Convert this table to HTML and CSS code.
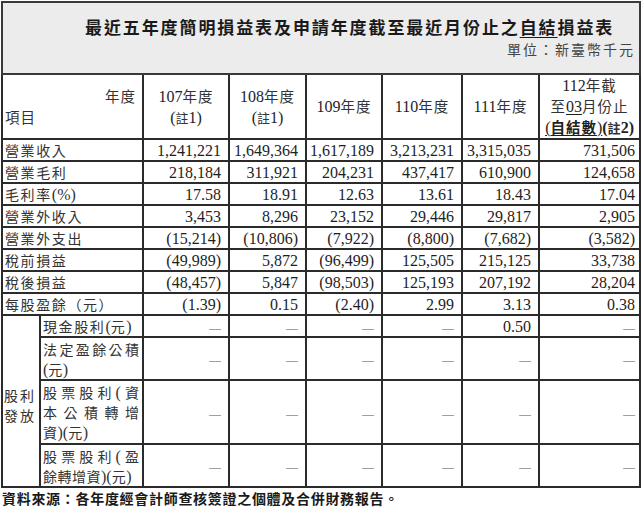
FILE: index.html
```html
<!DOCTYPE html>
<html lang="zh-Hant">
<head>
<meta charset="utf-8">
<title>最近五年度簡明損益表</title>
<link rel="stylesheet" href="styles.css">
</head>
<body>
<div class="page">
<table class="fin">
  <colgroup>
    <col class="c0a"><col class="c0b"><col class="c1"><col class="c2"><col class="c3"><col class="c4"><col class="c5"><col class="c6">
  </colgroup>
  <tr class="r-title">
    <td colspan="8" class="title-cell">
      <div class="ttl">最近五年度簡明損益表及申請年度截至最近月份止之<u>自結</u>損益表</div>
      <div class="unit">單位：新臺幣千元</div>
    </td>
  </tr>
  <tr class="r-head">
    <td colspan="2" class="hd0">
      <div class="hd-year"><span class="cj">年度</span></div>
      <div class="hd-item"><span class="cj">項目</span></div>
    </td>
    <td class="hd">107<span class="cj">年度</span><br>(<span class="cjs">註</span>1)</td>
    <td class="hd">108<span class="cj">年度</span><br>(<span class="cjs">註</span>1)</td>
    <td class="hd">109<span class="cj">年度</span></td>
    <td class="hd">110<span class="cj">年度</span></td>
    <td class="hd">111<span class="cj">年度</span></td>
    <td class="hd">112<span class="cj">年截</span><br><span class="cj">至</span><u>03</u><span class="cj">月份止</span><br><u>(<span class="cj b">自結數</span>)</u><b>(<span class="cjs">註</span>2)</b></td>
  </tr>
  <tr class="r"><td colspan="2" class="lb">營業收入</td><td>1,241,221</td><td>1,649,364</td><td>1,617,189</td><td>3,213,231</td><td>3,315,035</td><td>731,506</td></tr>
  <tr class="r"><td colspan="2" class="lb">營業毛利</td><td>218,184</td><td>311,921</td><td>204,231</td><td>437,417</td><td>610,900</td><td>124,658</td></tr>
  <tr class="r"><td colspan="2" class="lb">毛利率<span class="lat">(%)</span></td><td>17.58</td><td>18.91</td><td>12.63</td><td>13.61</td><td>18.43</td><td>17.04</td></tr>
  <tr class="r"><td colspan="2" class="lb">營業外收入</td><td>3,453</td><td>8,296</td><td>23,152</td><td>29,446</td><td>29,817</td><td>2,905</td></tr>
  <tr class="r"><td colspan="2" class="lb">營業外支出</td><td>(15,214)</td><td>(10,806)</td><td>(7,922)</td><td>(8,800)</td><td>(7,682)</td><td>(3,582)</td></tr>
  <tr class="r"><td colspan="2" class="lb">稅前損益</td><td>(49,989)</td><td>5,872</td><td>(96,499)</td><td>125,505</td><td>215,125</td><td>33,738</td></tr>
  <tr class="r"><td colspan="2" class="lb">稅後損益</td><td>(48,457)</td><td>5,847</td><td>(98,503)</td><td>125,193</td><td>207,192</td><td>28,204</td></tr>
  <tr class="r"><td colspan="2" class="lb">每股盈餘（元）</td><td>(1.39)</td><td>0.15</td><td>(2.40)</td><td>2.99</td><td>3.13</td><td>0.38</td></tr>
  <tr class="r">
    <td rowspan="4" class="div-lb">股利<br>發放</td>
    <td class="lb sub">現金股利<span class="lat">(</span>元<span class="lat">)</span></td>
    <td><span class="dash">—</span></td><td><span class="dash">—</span></td><td><span class="dash">—</span></td><td><span class="dash">—</span></td><td>0.50</td><td><span class="dash">—</span></td>
  </tr>
  <tr class="r2">
    <td class="lb sub"><span class="jl">法定盈餘公積</span><span class="ll"><span class="lat">(</span>元<span class="lat">)</span></span></td>
    <td><span class="dash">—</span></td><td><span class="dash">—</span></td><td><span class="dash">—</span></td><td><span class="dash">—</span></td><td><span class="dash">—</span></td><td><span class="dash">—</span></td>
  </tr>
  <tr class="r3">
    <td class="lb sub"><span class="jl">股票股利<span class="lat">(</span>資</span><span class="jl">本公積轉增</span><span class="ll">資<span class="lat">)(</span>元<span class="lat">)</span></span></td>
    <td><span class="dash">—</span></td><td><span class="dash">—</span></td><td><span class="dash">—</span></td><td><span class="dash">—</span></td><td><span class="dash">—</span></td><td><span class="dash">—</span></td>
  </tr>
  <tr class="r2b">
    <td class="lb sub"><span class="jl">股票股利<span class="lat">(</span>盈</span><span class="ll">餘轉增資<span class="lat">)(</span>元<span class="lat">)</span></span></td>
    <td><span class="dash">—</span></td><td><span class="dash">—</span></td><td><span class="dash">—</span></td><td><span class="dash">—</span></td><td><span class="dash">—</span></td><td><span class="dash">—</span></td>
  </tr>
</table>
<p class="source">資料來源：各年度經會計師查核簽證之個體及合併財務報告。</p>
</div>
</body>
</html>
```
FILE: styles.css
```css
html, body {
  margin: 0;
  padding: 0;
  background: #ffffff;
}
.page {
  padding: 1px 0 0 1px;
  width: 641px;
  font-family: "Liberation Serif", "Noto Sans CJK TC", serif;
  color: #1e1e1e;
}
.fin {
  border-collapse: collapse;
  table-layout: fixed;
  width: 640px;
  font-size: 16px;
}
.c0a { width: 38px; }
.c0b { width: 103px; }
.c1 { width: 86px; }
.c2 { width: 77px; }
.c3 { width: 76px; }
.c4 { width: 80px; }
.c5 { width: 77px; }
.c6 { width: 101px; }

.fin td {
  border: 2px solid #2b2b2b;
  padding: 0 7px 0 2px;
  text-align: right;
  vertical-align: middle;
  line-height: 19px;
  white-space: nowrap;
  overflow: hidden;
}
.fin td:last-child { padding-right: 4px; }

.r-title { height: 72px; }
.r-head { height: 65px; }
.r { height: 22px; }
.r2 { height: 43px; }
.r3 { height: 64px; }
.r2b { height: 43px; }

.fin td.title-cell {
  background: #ececec;
  vertical-align: top;
  text-align: left;
  padding: 12px 4px 0 82px;
  border-color: #3a3a3a;
}
.ttl {
  font-family: "Noto Sans CJK TC", sans-serif;
  font-size: 17px;
  font-weight: 700;
  letter-spacing: 1.9px;
  line-height: 24px;
  color: #1a1a1a;
}
.ttl u { text-underline-offset: 3px; }
.unit {
  font-family: "Noto Sans CJK TC", sans-serif;
  font-size: 14px;
  letter-spacing: 2px;
  line-height: 20px;
  text-align: right;
  color: #444;
}

.cj {
  font-family: "Noto Sans CJK TC", sans-serif;
  font-size: 14.5px;
  letter-spacing: 1px;
  line-height: 1;
  color: #333;
}
.cjs {
  font-family: "Noto Sans CJK TC", sans-serif;
  font-size: 13px;
  line-height: 1;
  color: #333;
}
.cj.b { font-weight: 700; color: #222; }

.fin td.hd {
  text-align: center;
  padding: 0 2px;
  line-height: 21px;
}
.fin td.hd u { text-underline-offset: 2px; }
.fin td.hd0 {
  text-align: left;
  padding: 0 6px 0 2px;
}
.hd-year { text-align: right; line-height: 21px; }
.hd-item { text-align: left; line-height: 21px; }

.fin td.lb {
  text-align: left;
  font-family: "Noto Sans CJK TC", sans-serif;
  font-size: 14px;
  letter-spacing: 1.6px;
  color: #333;
  padding: 0 2px 0 2px;
}
.lat {
  font-family: "Liberation Serif", serif;
  font-size: 16px;
  letter-spacing: 0;
  line-height: 1;
}
.fin td.sub {
  padding: 0 3px 0 2px;
  line-height: 20px;
}
.jl {
  display: block;
  text-align: justify;
  text-align-last: justify;
  letter-spacing: 0;
}
.ll {
  display: block;
  text-align: left;
  letter-spacing: 0.5px;
}
.fin td.div-lb {
  text-align: left;
  font-family: "Noto Sans CJK TC", sans-serif;
  font-size: 14px;
  letter-spacing: 2px;
  line-height: 20px;
  color: #333;
  padding: 8px 0 0 1px;
}
.dash {
  font-size: 12px;
  line-height: 1;
  color: #555;
}
.source {
  margin: 0;
  padding-left: 1px;
  font-family: "Noto Sans CJK TC", sans-serif;
  font-size: 14px;
  font-weight: 700;
  letter-spacing: 0.7px;
  line-height: 20px;
  color: #1a1a1a;
}
```
